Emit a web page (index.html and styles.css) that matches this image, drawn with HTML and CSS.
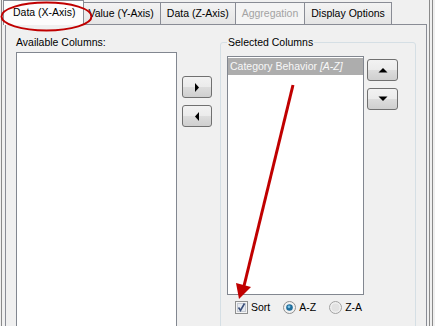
FILE: index.html
```html
<!DOCTYPE html>
<html lang="en">
<head>
    <meta charset="UTF-8">
    <title>Chart Columns</title>
    <link rel="stylesheet" href="styles.css">
</head>
<body>
<div class="shell">
    <div class="edge-left"></div>
    <div class="main">
        <div class="tabs">
            <div class="tab active">Data (X-Axis)</div>
            <div class="tab">Value (Y-Axis)</div>
            <div class="tab">Data (Z-Axis)</div>
            <div class="tab disabled">Aggregation</div>
            <div class="tab">Display Options</div>
        </div>
        <div class="panel">
            <div class="available">
                <div class="label">Available Columns:</div>
                <div class="list list-available"></div>
            </div>
            <div class="move-buttons">
                <button class="btn"><svg width="8" height="9" viewBox="0 0 8 9"><polygon points="2,0 6,4.5 2,9" fill="#000"/></svg></button>
                <button class="btn"><svg width="8" height="9" viewBox="0 0 8 9"><polygon points="6,0 2,4.5 6,9" fill="#000"/></svg></button>
            </div>
            <fieldset class="group">
                <legend>Selected Columns</legend>
                <div class="group-body">
                    <div class="list list-selected">
                        <div class="item selected">Category Behavior <i>[A-Z]</i></div>
                    </div>
                    <div class="order-buttons">
                        <button class="btn"><svg width="10" height="6" viewBox="0 0 10 6"><polygon points="0.5,5.5 5,1 9.5,5.5" fill="#000"/></svg></button>
                        <button class="btn"><svg width="10" height="6" viewBox="0 0 10 6"><polygon points="0.5,0.5 9.5,0.5 5,5" fill="#000"/></svg></button>
                    </div>
                </div>
                <div class="sort-row">
                    <span class="check">
                        <svg width="13" height="13" viewBox="0 0 13 13">
                            <rect x="0.5" y="0.5" width="12" height="12" fill="#f4f4f4" stroke="#8e8f8f"/>
                            <rect x="2.5" y="2.5" width="8" height="8" fill="#e6eaf0" stroke="#c4c9d2"/>
                            <path d="M3.5 6.5 L5.5 9.5 L9.5 2.5" fill="none" stroke="#3a4f7a" stroke-width="1.6"/>
                        </svg>
                        <span>Sort</span>
                    </span>
                    <span class="check radio-on">
                        <svg width="13" height="13" viewBox="0 0 13 13">
                            <circle cx="6.5" cy="6.5" r="6" fill="#f2f2f2" stroke="#8e8f8f"/>
                            <circle cx="6.5" cy="6.5" r="3.3" fill="#1f6e9c"/>
                            <circle cx="6" cy="5.8" r="1.4" fill="#7cc3e6"/>
                        </svg>
                        <span>A-Z</span>
                    </span>
                    <span class="check">
                        <svg width="13" height="13" viewBox="0 0 13 13">
                            <circle cx="6.5" cy="6.5" r="6" fill="#f0f0f0" stroke="#a2a2a2"/>
                            <circle cx="6.5" cy="6.5" r="4" fill="#e2e2e2"/>
                        </svg>
                        <span>Z-A</span>
                    </span>
                </div>
            </fieldset>
        </div>
    </div>
    <div class="edge-right"><div class="edge-lines"></div></div>
    <svg class="annotations" width="435" height="326" viewBox="0 0 435 326">
        <ellipse cx="46.5" cy="16.5" rx="45" ry="14" fill="none" stroke="#c00000" stroke-width="2"/>
        <line x1="293" y1="85" x2="244" y2="286" stroke="#c00000" stroke-width="3"/>
        <polygon points="236,283 251,287 239,299" fill="#c00000"/>
    </svg>
</div>
</body>
</html>
```

FILE: styles.css
```css
body {
  margin: 0;
  background-color: #f0f0f0;
  font-family: 'Liberation Sans', Arial, sans-serif;
  font-size: 10.5px;
  color: #000;
  overflow: hidden;
}
.shell {
  position: relative;
  width: 435px;
  height: 326px;
  display: flex;
  overflow: hidden;
}
.edge-left {
  flex: none;
  width: 2px;
  margin-left: 1px;
  margin-right: 1px;
  border-left: 1px solid #8a8a8a;
}
.main {
  flex: none;
  width: 422px;
  display: flex;
  flex-direction: column;
}
.tabs {
  height: 26px;
  display: flex;
  align-items: flex-end;
  position: relative;
  z-index: 1;
  margin-bottom: -1px;
}
.tab {
  height: 21px;
  line-height: 21px;
  padding: 0 6px;
  border: 1px solid #898c95;
  border-bottom: none;
  margin-left: -1px;
  margin-bottom: 1px;
  background: linear-gradient(#f3f3f3, #e5e5e5);
  white-space: nowrap;
}
.tab.active {
  height: 24px;
  line-height: 22px;
  padding: 0 8px 0 9px;
  margin: 0 -2px 0 -2px;
  background: #fcfcfc;
  position: relative;
  z-index: 2;
}
.tab.disabled {
  color: #a3a3a3;
  background: #f4f4f4;
}
.panel {
  flex: 1;
  border: 1px solid #898c95;
  border-bottom: none;
  display: flex;
  align-items: flex-start;
  padding: 11px 0 0 10px;
}
.label {
  line-height: 13px;
}
.list {
  background: #fff;
  border: 1px solid #828790;
  box-sizing: border-box;
}
.list-available {
  width: 161px;
  height: 300px;
  margin-top: 3px;
}
.move-buttons,
.order-buttons {
  flex: none;
  display: flex;
  flex-direction: column;
  gap: 7px;
}
.move-buttons {
  margin: 40px 0 0 5px;
}
.btn {
  width: 30px;
  height: 22px;
  padding: 0;
  border: 1px solid #707070;
  border-radius: 3px;
  background: linear-gradient(#f2f2f2 0%, #ebebeb 50%, #dddddd 50%, #cfcfcf 100%);
  display: flex;
  align-items: center;
  justify-content: center;
}
.group {
  flex: none;
  box-sizing: border-box;
  width: 196px;
  min-width: 196px;
  height: 300px;
  margin: 0 0 0 8px;
  padding: 0 6px;
  border: 1px solid #d5dfe5;
  border-radius: 3px;
}
.group legend {
  padding: 0 1px;
  line-height: 13px;
}
.group-body {
  display: flex;
  align-items: flex-start;
  margin-top: 7px;
}
.list-selected {
  flex: none;
  width: 137px;
  height: 239px;
  padding: 1px 0 0 0;
}
.item {
  height: 17px;
  line-height: 17px;
  padding-left: 2px;
  white-space: nowrap;
}
.item.selected {
  background: #adadad;
  color: #f8f8f8;
}
.order-buttons {
  margin: 3px 0 0 3px;
}
.order-buttons .btn {
  width: 31px;
}
.sort-row {
  display: flex;
  align-items: center;
  gap: 13px;
  margin: 6px 0 0 8px;
  height: 13px;
}
.check {
  display: flex;
  align-items: center;
  gap: 3px;
  line-height: 13px;
}
.check svg {
  display: block;
}
.edge-right {
  flex: none;
  padding-left: 2px;
}
.edge-lines {
  width: 2px;
  height: 100%;
  border-left: 1px solid #8a8a8a;
  border-right: 1px solid #8a8a8a;
}
.annotations {
  position: absolute;
  left: 0;
  top: 0;
  z-index: 5;
  pointer-events: none;
}
```
